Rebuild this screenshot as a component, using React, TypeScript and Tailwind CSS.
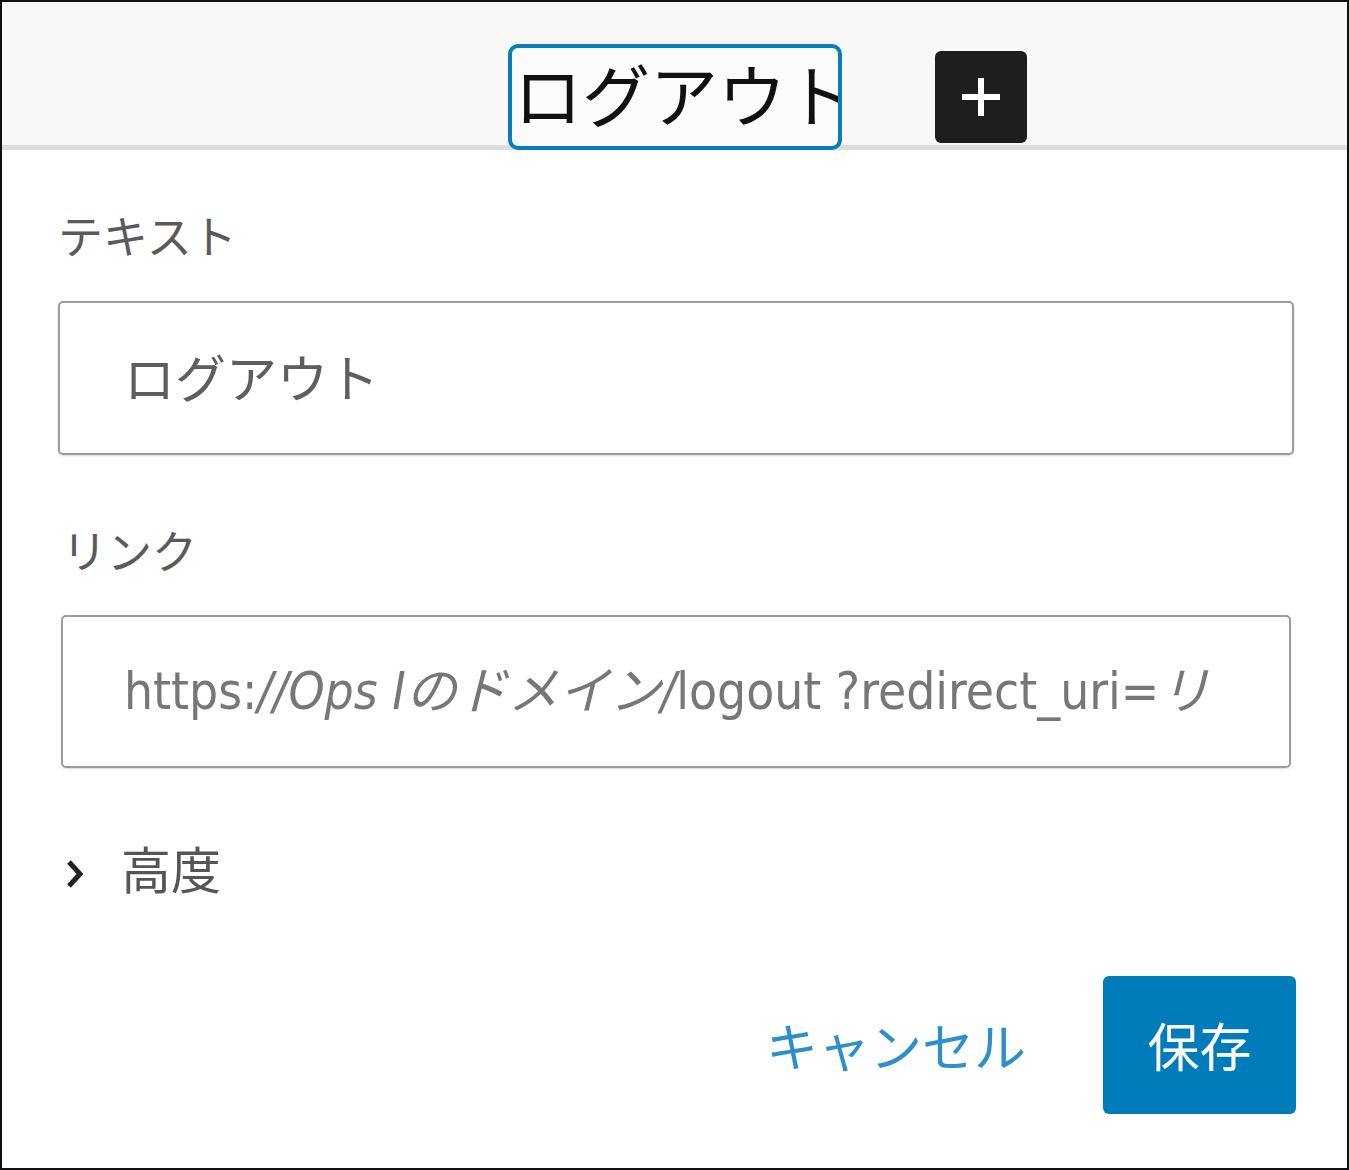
const jp = "font-['Noto_Sans_CJK_JP',sans-serif]";

const PlusIcon = () => (
  <svg width="44" height="44" viewBox="0 0 44 44">
    <path d="M22 3v38M3 22h38" stroke="#fff" strokeWidth="6" />
  </svg>
);

const Chevron = () => (
  <svg width="20" height="32" viewBox="0 0 20 32">
    <path d="M4 4l11 12-11 12" fill="none" stroke="#222" strokeWidth="5" />
  </svg>
);

export default function App() {
  return (
    <div className={`w-[1349px] h-[1170px] border-2 border-[#111] bg-white flex flex-col ${jp}`}>
      {/* toolbar */}
      <div className="h-[148px] bg-[#f8f8f8] border-b-[5px] border-[#dddddd] flex items-start shrink-0">
        <div className="ml-[506px] mt-[42px] w-[334px] h-[106px] border-[4px] border-[#0a7cc0] rounded-[10px] bg-[#fbfbfb] overflow-hidden flex items-center">
          <span className="text-[68px] leading-none text-[#111] whitespace-nowrap pl-[2px] -mt-[8px]">
            ログアウト
          </span>
        </div>
        <button className="ml-[93px] mt-[49px] w-[92px] h-[92px] bg-[#1e1e1e] rounded-[6px] flex items-center justify-center">
          <PlusIcon />
        </button>
      </div>

      {/* form */}
      <div className="flex flex-col pl-[56px] pr-[53px]">
        <label className="mt-[62px] text-[45px] leading-none text-[#5a5a5a]">テキスト</label>
        <div className="mt-[44px] w-[1236px] h-[154px] border-2 border-[#9c9c9c] rounded-[5px] shadow-[0_1px_2px_rgba(0,0,0,0.15)] flex items-center pl-[64px]">
          <span className="text-[51px] leading-none text-[#5e5e5e] -mt-[4px]">ログアウト</span>
        </div>

        <label className="mt-[72px] ml-[4px] text-[45px] leading-none text-[#5a5a5a]">リンク</label>
        <div className="mt-[43px] ml-[3px] w-[1230px] h-[153px] border-2 border-[#9c9c9c] rounded-[5px] shadow-[0_1px_2px_rgba(0,0,0,0.15)] flex items-center pl-[61px] overflow-hidden">
          <span className="text-[51px] leading-none text-[#777] whitespace-nowrap font-['DejaVu_Sans_Condensed','DejaVu_Sans','Noto_Sans_CJK_JP',sans-serif]">
            https:<span className="italic">//Ops Iのドメイン/</span>logout ?redirect_uri=<span className="italic">リ</span>
          </span>
        </div>

        <div className="mt-[74px] flex items-center">
          <span className="ml-[7px] mt-[14px]">
            <Chevron />
          </span>
          <span className="ml-[36px] text-[50px] leading-none text-[#555]">高度</span>
        </div>

        <div className="mt-[84px] flex items-center justify-end w-[1238px]">
          <button className="text-[52px] leading-none text-[#2f8fca]">キャンセル</button>
          <button className="ml-[77px] w-[193px] h-[138px] bg-[#007cba] rounded-[6px] text-[52px] leading-none text-white">
            保存
          </button>
        </div>
      </div>
    </div>
  );
}
